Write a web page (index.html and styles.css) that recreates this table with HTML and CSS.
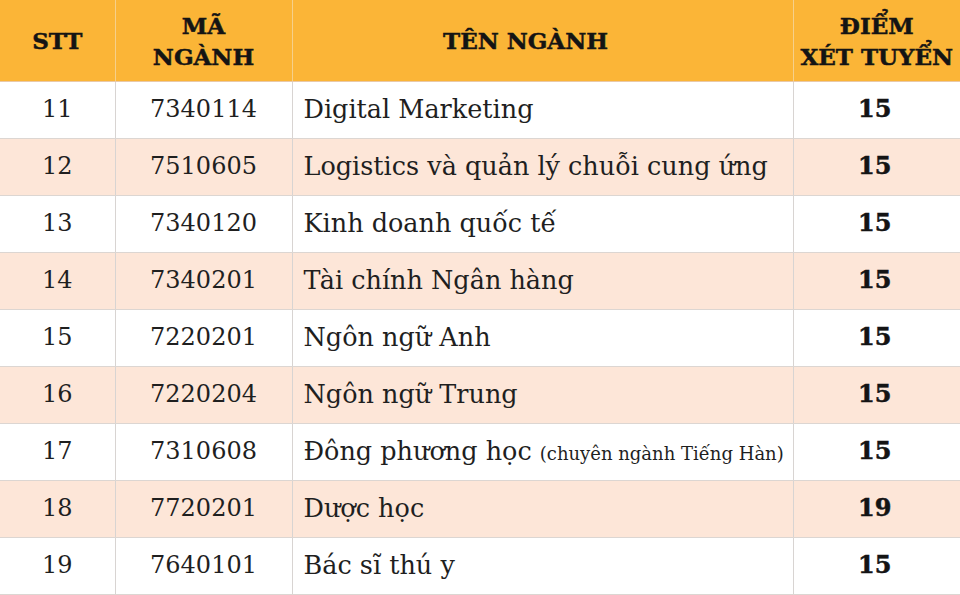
FILE: index.html
```html
<!DOCTYPE html>
<html lang="vi">
<head>
<meta charset="utf-8">
<link rel="stylesheet" href="styles.css">
</head>
<body>
<table class="grid">
  <colgroup>
    <col class="c-stt"><col class="c-ma"><col class="c-ten"><col class="c-diem">
  </colgroup>
  <thead>
    <tr class="head">
      <th>STT</th>
      <th>MÃ<br>NGÀNH</th>
      <th class="h-ten">TÊN NGÀNH</th>
      <th>ĐIỂM<br>XÉT TUYỂN</th>
    </tr>
  </thead>
  <tbody>
    <tr><td>11</td><td>7340114</td><td class="name">Digital Marketing</td><td class="score">15</td></tr>
    <tr class="alt"><td>12</td><td>7510605</td><td class="name">Logistics và quản lý chuỗi cung ứng</td><td class="score">15</td></tr>
    <tr><td>13</td><td>7340120</td><td class="name">Kinh doanh quốc tế</td><td class="score">15</td></tr>
    <tr class="alt"><td>14</td><td>7340201</td><td class="name">Tài chính Ngân hàng</td><td class="score">15</td></tr>
    <tr><td>15</td><td>7220201</td><td class="name">Ngôn ngữ Anh</td><td class="score">15</td></tr>
    <tr class="alt"><td>16</td><td>7220204</td><td class="name">Ngôn ngữ Trung</td><td class="score">15</td></tr>
    <tr><td>17</td><td>7310608</td><td class="name">Đông phương học <span class="note">(chuyên ngành Tiếng Hàn)</span></td><td class="score">15</td></tr>
    <tr class="alt"><td>18</td><td>7720201</td><td class="name">Dược học</td><td class="score">19</td></tr>
    <tr><td>19</td><td>7640101</td><td class="name">Bác sĩ thú y</td><td class="score">15</td></tr>
  </tbody>
</table>
</body>
</html>
```
FILE: styles.css
```css
html, body {
  margin: 0;
  padding: 0;
  background: #ffffff;
}
body {
  width: 960px;
  height: 595px;
  overflow: hidden;
}
.grid {
  width: 960px;
  border-collapse: collapse;
  table-layout: fixed;
  font-family: "DejaVu Serif", "Liberation Serif", serif;
  color: #1f1f1f;
}
.c-stt { width: 115px; }
.c-ma { width: 177px; }
.c-ten { width: 501px; }
.c-diem { width: 167px; }

.head th {
  background: #fbb537;
  height: 81px;
  padding: 0;
  font-size: 23px;
  font-weight: bold;
  line-height: 31px;
  color: #141414;
  -webkit-text-stroke: 0.5px #141414;
  border-left: 1px solid #f6d08a;
  border-bottom: 1px solid #e9c9a8;
  text-align: center;
  vertical-align: middle;
}
.head th:first-child { border-left: none; }
.head th.h-ten { padding-right: 34px; }

td {
  height: 57px;
  padding: 0 0 3px 0;
  box-sizing: border-box;
  font-size: 24px;
  text-align: center;
  vertical-align: middle;
  border-left: 1px solid #d8d4d2;
  border-bottom: 1px solid #dcd6d2;
}
td:first-child { border-left: none; }
tr.alt td { background: #fde6d8; }
td.name {
  text-align: left;
  padding-left: 11px;
  font-size: 25.5px;
  white-space: nowrap;
}
td.score {
  font-weight: bold;
  font-size: 24px;
  padding-right: 4px;
  color: #141414;
  -webkit-text-stroke: 0.5px #141414;
}
.note { font-size: 18px; }
```
